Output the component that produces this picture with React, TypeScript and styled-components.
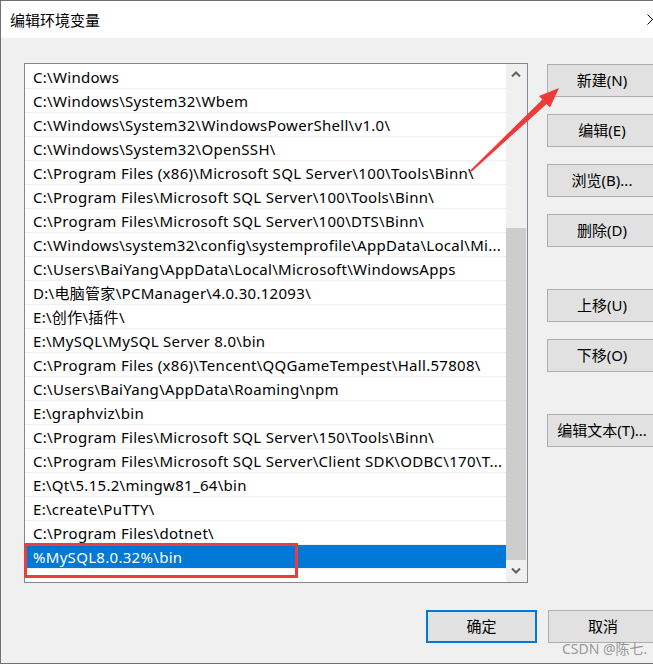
import styled, { createGlobalStyle } from "styled-components";

const GlobalStyle = createGlobalStyle`
  body {
    margin: 0;
    background: #f0f0f0;
    font-family: "Noto Sans", "Noto Sans CJK SC", sans-serif;
  }
`;

const Viewport = styled.div`
  width: 653px;
  height: 664px;
  overflow: hidden;
  position: relative;
`;

const Window = styled.div`
  position: relative;
  width: 676px;
  height: 664px;
  box-sizing: border-box;
  border: 1px solid #707070;
  background: #f0f0f0;
  display: flex;
  flex-direction: column;
`;

const TitleBar = styled.div`
  height: 37px;
  background: #fff;
  display: flex;
  align-items: center;
  justify-content: space-between;
  padding-left: 9px;
  font-family: "Noto Sans CJK SC", sans-serif;
  font-size: 15px;
  color: #000;
`;

const CloseButton = styled.div`
  width: 46px;
  height: 37px;
  display: flex;
  align-items: center;
  justify-content: center;
`;

const Body = styled.div`
  flex: 1;
  padding: 25px 17px 0 23px;
  display: flex;
  flex-direction: column;
`;

const Main = styled.div`
  display: flex;
  gap: 19px;
`;

const ListBox = styled.div`
  width: 504px;
  height: 520px;
  box-sizing: border-box;
  border: 1px solid #828790;
  background: #fff;
  display: flex;
`;

const Rows = styled.div`
  width: 481px;
  padding-top: 1px;
  display: flex;
  flex-direction: column;
`;

const Row = styled.div<{ $selected?: boolean }>`
  height: 24px;
  box-sizing: border-box;
  border-bottom: 1px solid #f0f0f0;
  padding: 0 4px 0 8px;
  display: flex;
  align-items: center;
  font-size: 15px;
  letter-spacing: 0.3px;
  white-space: nowrap;
  overflow: hidden;
  color: ${(p) => (p.$selected ? "#fff" : "#000")};
  background: ${(p) => (p.$selected ? "#0078d7" : "transparent")};
`;

const ScrollTrack = styled.div`
  width: 21px;
  background: #f0f0f0;
  display: flex;
  flex-direction: column;
`;

const ScrollArrow = styled.div<{ $h: number }>`
  height: ${(p) => p.$h}px;
  display: flex;
  align-items: center;
  justify-content: center;
  padding-right: 1px;
`;

const ScrollGap = styled.div`
  height: 144px;
`;

const Thumb = styled.div`
  height: 332px;
  width: 20px;
  background: #cdcdcd;
`;

const Side = styled.div`
  padding-top: 1px;
  display: flex;
  flex-direction: column;
`;

const Button = styled.div<{ $primary?: boolean; $gap?: number; $w?: number }>`
  width: ${(p) => p.$w ?? 110}px;
  height: 33px;
  margin-top: ${(p) => p.$gap ?? 0}px;
  padding-bottom: 2px;
  box-sizing: border-box;
  border: ${(p) => (p.$primary ? "2px solid #0078d7" : "1px solid #adadad")};
  background: #e1e1e1;
  display: flex;
  align-items: center;
  justify-content: center;
  font-size: 15px;
  color: #000;
  white-space: nowrap;
`;

const Footer = styled.div`
  margin-top: 27px;
  display: flex;
  justify-content: flex-end;
  gap: 11px;
`;

const RedBox = styled.div`
  position: absolute;
  left: 23px;
  top: 542px;
  width: 274px;
  height: 35px;
  box-sizing: border-box;
  border: 3px solid #ee3b3b;
`;

const Annotation = styled.svg`
  position: absolute;
  left: 0;
  top: 0;
  pointer-events: none;
`;

const Watermark = styled.div`
  position: absolute;
  left: 561px;
  top: 637px;
  font-family: "Noto Sans", "Noto Sans CJK SC", sans-serif;
  font-size: 14px;
  color: rgba(120, 120, 120, 0.75);
  white-space: nowrap;
`;

const paths = [
  "C:\\Windows",
  "C:\\Windows\\System32\\Wbem",
  "C:\\Windows\\System32\\WindowsPowerShell\\v1.0\\",
  "C:\\Windows\\System32\\OpenSSH\\",
  "C:\\Program Files (x86)\\Microsoft SQL Server\\100\\Tools\\Binn\\",
  "C:\\Program Files\\Microsoft SQL Server\\100\\Tools\\Binn\\",
  "C:\\Program Files\\Microsoft SQL Server\\100\\DTS\\Binn\\",
  "C:\\Windows\\system32\\config\\systemprofile\\AppData\\Local\\Mi...",
  "C:\\Users\\BaiYang\\AppData\\Local\\Microsoft\\WindowsApps",
  "D:\\电脑管家\\PCManager\\4.0.30.12093\\",
  "E:\\创作\\插件\\",
  "E:\\MySQL\\MySQL Server 8.0\\bin",
  "C:\\Program Files (x86)\\Tencent\\QQGameTempest\\Hall.57808\\",
  "C:\\Users\\BaiYang\\AppData\\Roaming\\npm",
  "E:\\graphviz\\bin",
  "C:\\Program Files\\Microsoft SQL Server\\150\\Tools\\Binn\\",
  "C:\\Program Files\\Microsoft SQL Server\\Client SDK\\ODBC\\170\\T...",
  "E:\\Qt\\5.15.2\\mingw81_64\\bin",
  "E:\\create\\PuTTY\\",
  "C:\\Program Files\\dotnet\\",
  "%MySQL8.0.32%\\bin",
];

const Chevron = ({ up }: { up?: boolean }) => (
  <svg width="10" height="6" viewBox="0 0 10 6">
    <polyline
      points={up ? "1,5.5 5,1.5 9,5.5" : "1,0.5 5,4.5 9,0.5"}
      fill="none"
      stroke="#606060"
      strokeWidth="2"
    />
  </svg>
);

export default function App() {
  return (
    <>
      <GlobalStyle />
      <Viewport>
        <Window>
          <TitleBar>
            <span>编辑环境变量</span>
            <CloseButton>
              <svg width="11" height="11" viewBox="0 0 11 11">
                <path d="M0.5 0.5 L10.5 10.5 M10.5 0.5 L0.5 10.5" stroke="#000" strokeWidth="1" />
              </svg>
            </CloseButton>
          </TitleBar>
          <Body>
            <Main>
              <ListBox>
                <Rows>
                  {paths.map((p, i) => (
                    <Row key={i} $selected={i === paths.length - 1}>
                      {p}
                    </Row>
                  ))}
                </Rows>
                <ScrollTrack>
                  <ScrollArrow $h={20}>
                    <Chevron up />
                  </ScrollArrow>
                  <ScrollGap />
                  <Thumb />
                  <ScrollArrow $h={22}>
                    <Chevron />
                  </ScrollArrow>
                </ScrollTrack>
              </ListBox>
              <Side>
                <Button>新建(N)</Button>
                <Button $gap={17}>编辑(E)</Button>
                <Button $gap={17}>浏览(B)...</Button>
                <Button $gap={17}>删除(D)</Button>
                <Button $gap={42}>上移(U)</Button>
                <Button $gap={17}>下移(O)</Button>
                <Button $gap={42}>编辑文本(T)...</Button>
              </Side>
            </Main>
            <Footer>
              <Button $primary $w={111}>确定</Button>
              <Button>取消</Button>
            </Footer>
          </Body>
          <RedBox />
          <Annotation width="676" height="664" viewBox="0 0 676 664">
            <polygon
              points="469.4,169.2 541.4,98.5 538,94.9 558,87 549,106.5 545.6,102.9 470.6,170.8"
              fill="#f03a3a"
            />
          </Annotation>
          <Watermark>CSDN @陈七.</Watermark>
        </Window>
      </Viewport>
    </>
  );
}
